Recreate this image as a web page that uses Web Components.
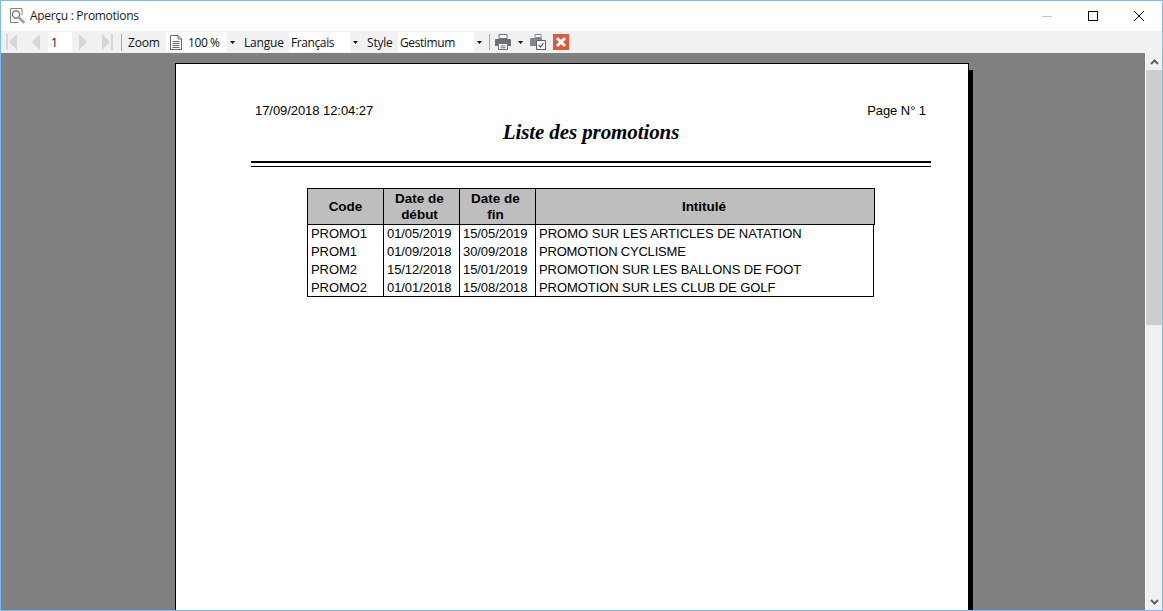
<!DOCTYPE html>
<html lang="fr">
<head>
<meta charset="utf-8">
<title>Aperçu : Promotions</title>
<style>
	html, body { margin: 0; height: 100%; overflow: hidden; }
	body { font-family: "Open Sans", "Liberation Sans", sans-serif; }
</style>
</head>
<body>
<app-window>
	<title-bar slot="title">Aperçu : Promotions</title-bar>
	<tool-bar slot="tools"></tool-bar>
	<preview-pane slot="pane">
		<report-page>
			<report-table></report-table>
		</report-page>
	</preview-pane>
	<scroll-bar slot="scroll"></scroll-bar>
</app-window>

<script>
class AppWindow extends HTMLElement {
	constructor() {
		super();
		this.attachShadow({mode: 'open'});
		this.shadowRoot.innerHTML = `
			<style>
				:host {
					display: flex;
					flex-direction: column;
					box-sizing: border-box;
					width: 1163px;
					height: 611px;
					border: 1px solid #7fb9f5;
					background: #fff;
					overflow: hidden;
				}
				.body { flex: 1; display: flex; min-height: 0; }
			</style>
			<slot name="title"></slot>
			<slot name="tools"></slot>
			<div class="body">
				<slot name="pane"></slot>
				<slot name="scroll"></slot>
			</div>
		`;
	}
}

class TitleBar extends HTMLElement {
	constructor() {
		super();
		this.attachShadow({mode: 'open'});
		this.shadowRoot.innerHTML = `
			<style>
				:host {
					display: flex;
					align-items: center;
					height: 30px;
					flex: none;
					background: #fff;
					color: #1a1a1a;
					font: 12px "Open Sans", sans-serif;
				}
				.icon { margin: 0 4px 0 9px; display: block; }
				.label { flex: 1; letter-spacing: -0.3px; line-height: 30px; height: 30px; }
				.btn { width: 46px; height: 30px; display: flex; align-items: center; justify-content: center; }
			</style>
			<svg class="icon" width="16" height="17" viewBox="0 0 16 17">
				<path d="M.5 .5h11.500v7M.5 .5v14h8" fill="none" stroke="#858585"/>
				<circle cx="6" cy="6.500" r="3.600" fill="#fff" stroke="#6a6a6a" stroke-width="1.200"/>
				<path d="M8.800 9.300l5.500 5.500" stroke="#9a9a9a" stroke-width="2.600"/>
			</svg>
			<span class="label"><slot></slot></span>
			<div class="btn"><svg width="10" height="10" viewBox="0 0 10 10"><path d="M0 5.500h10" stroke="#c6c6c6"/></svg></div>
			<div class="btn"><svg width="10" height="10" viewBox="0 0 10 10"><rect x=".5" y=".5" width="9" height="9" fill="none" stroke="#000"/></svg></div>
			<div class="btn"><svg width="10" height="10" viewBox="0 0 10 10"><path d="M0 0l10 10M10 0L0 10" stroke="#000" fill="none"/></svg></div>
		`;
	}
}

class ToolBar extends HTMLElement {
	constructor() {
		super();
		this.attachShadow({mode: 'open'});
		const caret = `<svg width="5" height="3" viewBox="0 0 5 3"><path d="M0 0h5L2.500 3z" fill="#111"/></svg>`;
		this.shadowRoot.innerHTML = `
			<style>
				:host {
					display: flex;
					align-items: center;
					height: 22px;
					flex: none;
					background: #f1f1f1;
					color: #111;
					font: 12px "Open Sans", sans-serif;
					letter-spacing: -0.2px;
				}
				svg { display: block; flex: none; }
				.box { background: #fff; height: 20px; display: flex; align-items: center; box-sizing: border-box; flex: none; }
				.arrow { width: 11px; height: 20px; display: flex; align-items: center; justify-content: center; flex: none; }
				.sep { width: 1px; height: 17px; background: #a8a8a8; flex: none; }
				.txt { flex: none; }
				.tight { letter-spacing: -0.4px; }
			</style>
			<svg style="margin-left:5px" width="11" height="16" viewBox="0 0 11 16"><path d="M0 0h2v16H0zM11 0v16L3 8z" fill="#d6d6d6"/></svg>
			<svg style="margin-left:15px" width="9" height="16" viewBox="0 0 9 16"><path d="M8 0v16L0 8z" fill="#d6d6d6"/></svg>
			<div class="box" style="margin-left:7px;width:24px;padding-left:3px">1</div>
			<svg style="margin-left:7px" width="9" height="16" viewBox="0 0 9 16"><path d="M0 0v16l8-8z" fill="#d6d6d6"/></svg>
			<svg style="margin-left:14px" width="11" height="16" viewBox="0 0 11 16"><path d="M0 0v16l8-8zM9 0h2v16H9z" fill="#d6d6d6"/></svg>
			<div class="sep" style="margin-left:8px"></div>
			<span class="txt" style="margin-left:6px;width:32px">Zoom</span>
			<div class="box" style="margin-left:6px;width:61px;padding-left:4px">
				<svg width="12" height="15" viewBox="0 0 12 15"><path d="M.5 .5h7.500l3.500 3.500v10.500h-11zM8 .5v3.500h3.500M2.500 6.500h7M2.500 8.500h7M2.500 10.500h7M2.500 12.500h7" fill="none" stroke="#6a6a6a"/></svg>
				<span class="tight" style="margin-left:6px">100 %</span>
			</div>
			<div class="arrow">${caret}</div>
			<span class="txt" style="margin-left:6px;width:40px">Langue</span>
			<div class="box tight" style="margin-left:5px;width:61px;padding-left:2px">Français</div>
			<div class="arrow">${caret}</div>
			<span class="txt" style="margin-left:6px;width:26px">Style</span>
			<div class="box tight" style="margin-left:5px;width:76px;padding-left:2px">Gestimum</div>
			<div class="arrow">${caret}</div>
			<div class="sep" style="margin-left:4px;height:16px"></div>
			<svg style="margin-left:5px" width="16" height="16" viewBox="0 0 16 16">
				<path d="M4 .5h8v4H4z" fill="#fff" stroke="#6a7076"/>
				<path d="M1 5h14a1 1 0 0 1 1 1v6h-3V9.500H3V12H0V6a1 1 0 0 1 1-1z" fill="#6a7076"/>
				<path d="M3.500 9.500h9v6h-9zM5.500 12h5M5.500 13.800h5" fill="#fff" stroke="#6a7076"/>
			</svg>
			<div style="margin-left:7px">${caret}</div>
			<svg style="margin-left:7px" width="16" height="16" viewBox="0 0 16 16">
				<path d="M5 .5h6v3H5z" fill="#fff" stroke="#80868b"/>
				<path d="M1 4h11v2H6v6H0V5a1 1 0 0 1 1-1z" fill="#80868b"/>
				<path d="M6.500 6.500h9v9h-9z" fill="#fff" stroke="#5c6166"/>
				<path d="M8.500 11l2 2 3-4" fill="none" stroke="#5c6166" stroke-width="1.200"/>
			</svg>
			<svg style="margin-left:7px" width="16" height="16" viewBox="0 0 16 16">
				<rect width="16" height="16" fill="#dc5a39"/>
				<path d="M4 4l8 8M12 4l-8 8" stroke="#fff" stroke-width="3"/>
			</svg>
		`;
	}
}

class PreviewPane extends HTMLElement {
	constructor() {
		super();
		this.attachShadow({mode: 'open'});
		this.shadowRoot.innerHTML = `
			<style>
				:host {
					display: block;
					width: 1144px;
					height: 100%;
					flex: none;
					box-sizing: border-box;
					background: #808080;
					padding: 10px 0 0 174px;
					overflow: hidden;
				}
			</style>
			<slot></slot>
		`;
	}
}

class ScrollBar extends HTMLElement {
	constructor() {
		super();
		this.attachShadow({mode: 'open'});
		this.shadowRoot.innerHTML = `
			<style>
				:host {
					display: flex;
					flex-direction: column;
					box-sizing: border-box;
					width: 17px;
					margin-left: 1px;
					flex: none;
					background: #f0f0f0;
				}
				.end { height: 17px; display: flex; align-items: center; justify-content: center; flex: none; }
				.thumb { height: 255px; background: #cdcdcd; flex: none; }
				.track { flex: 1; }
				svg { display: block; }
			</style>
			<div class="end"><svg width="9" height="6" viewBox="0 0 9 6"><path d="M1 5l3.500-3.500L8 5" fill="none" stroke="#606060" stroke-width="2"/></svg></div>
			<div class="thumb"></div>
			<div class="track"></div>
			<div class="end"><svg width="9" height="6" viewBox="0 0 9 6"><path d="M1 1l3.500 3.500L8 1" fill="none" stroke="#606060" stroke-width="2"/></svg></div>
		`;
	}
}

class ReportPage extends HTMLElement {
	constructor() {
		super();
		this.attachShadow({mode: 'open'});
		this.shadowRoot.innerHTML = `
			<style>
				:host {
					display: block;
					box-sizing: border-box;
					width: 794px;
					height: 1123px;
					background: #fff;
					border: 1px solid #000;
					box-shadow: 4px 7px 0 #000;
					color: #000;
					font: 13px "Liberation Sans", Arial, sans-serif;
					padding: 39px 0 0 75px;
				}
				.top { display: flex; justify-content: space-between; padding: 0 5px 0 4px; width: 680px; box-sizing: border-box; height: 15px; line-height: 15px; letter-spacing: -0.06px; }
				h1 {
					margin: 2px 0 0;
					width: 680px;
					text-align: center;
					font: italic bold 21px "Liberation Serif", "Times New Roman", serif;
					line-height: 24px;
					letter-spacing: -0.1px;
				}
				.rule { width: 680px; height: 2px; background: #000; margin-top: 17px; }
				.rule.thin { height: 1px; margin-top: 3px; }
				.table { margin: 21px 0 0 56px; }
			</style>
			<div class="top"><span>17/09/2018 12:04:27</span><span>Page N° 1</span></div>
			<h1>Liste des promotions</h1>
			<div class="rule"></div>
			<div class="rule thin"></div>
			<div class="table"><slot></slot></div>
		`;
	}
}

class ReportTable extends HTMLElement {
	constructor() {
		super();
		this.attachShadow({mode: 'open'});
		const rows = [
			['PROMO1', '01/05/2019', '15/05/2019', 'PROMO SUR LES ARTICLES DE NATATION'],
			['PROM1', '01/09/2018', '30/09/2018', 'PROMOTION CYCLISME'],
			['PROM2', '15/12/2018', '15/01/2019', 'PROMOTION SUR LES BALLONS DE FOOT'],
			['PROMO2', '01/01/2018', '15/08/2018', 'PROMOTION SUR LES CLUB DE GOLF']
		];
		const column = (index) => rows.map(row => `<div class="cell">${row[index]}</div>`).join('');
		this.shadowRoot.innerHTML = `
			<style>
				:host { display: block; width: 568px; font: 13px "Liberation Sans", Arial, sans-serif; color: #000; }
				.head, .data { display: grid; grid-template-columns: 76px 76px 76px 1fr; box-sizing: border-box; }
				.head { height: 37px; border: 1px solid #000; background: #bebebe; width: 568px; font-weight: bold; font-size: 13.5px; text-align: center; line-height: 16px; }
				.head div { display: flex; align-items: center; justify-content: center; border-right: 1px solid #000; padding-top: 1px; }
				.head div:nth-child(-n+3) { width: 76px; box-sizing: border-box; }
				.head div:nth-child(2), .head div:nth-child(3) { padding-right: 4px; }
				.head div:last-child { border-right: 0; padding-right: 2px; }
				.data { width: 567px; height: 72px; border: 1px solid #000; border-top: 0; letter-spacing: -0.07px; }
				.col { border-right: 1px solid #000; }
				.col:last-child { border-right: 0; }
				.col:last-child .cell:nth-child(1) { letter-spacing: 0; }
				.col:last-child .cell:nth-child(2) { letter-spacing: -0.2px; }
				.cell { height: 18px; line-height: 18px; padding-left: 3px; white-space: nowrap; }
			</style>
			<div class="head"><div>Code</div><div>Date de<br>début</div><div>Date de<br>fin</div><div>Intitulé</div></div>
			<div class="data">
				<div class="col">${column(0)}</div>
				<div class="col">${column(1)}</div>
				<div class="col">${column(2)}</div>
				<div class="col">${column(3)}</div>
			</div>
		`;
	}
}

customElements.define('app-window', AppWindow);
customElements.define('title-bar', TitleBar);
customElements.define('tool-bar', ToolBar);
customElements.define('preview-pane', PreviewPane);
customElements.define('scroll-bar', ScrollBar);
customElements.define('report-page', ReportPage);
customElements.define('report-table', ReportTable);
</script>
</body>
</html>
